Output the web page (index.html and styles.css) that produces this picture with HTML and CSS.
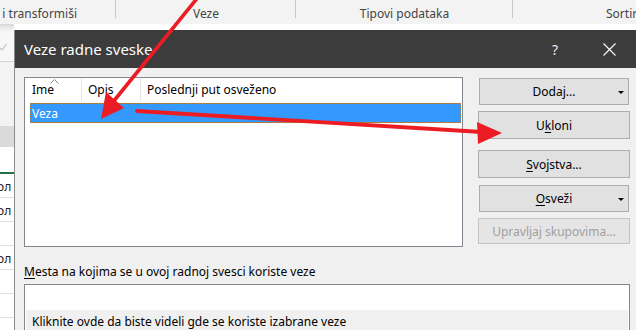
FILE: index.html
```html
<!DOCTYPE html>
<html lang="sr">
<head>
    <meta charset="UTF-8">
    <meta name="viewport" content="width=device-width, initial-scale=1.0">
    <title>Veze radne sveske</title>
    <link rel="stylesheet" href="styles.css">
</head>
<body>
    <div class="ribbon">
        <div class="group g1"><span>Preuzmi i transformiši</span></div>
        <div class="group g2"><span>Veze</span></div>
        <div class="group g3"><span>Tipovi podataka</span></div>
        <div class="group g4"><span>Sortiraj i filtriraj</span></div>
    </div>

    <div class="workspace">
        <div class="sheet">
            <div class="formula-bar">
                <svg class="check" width="8" height="8" viewBox="0 0 8 8"><polyline points="0.5,4.5 3,7 7.5,1" fill="none" stroke="#c4c4c4" stroke-width="1.2"/></svg>
            </div>
            <div class="sheet-gap"></div>
            <div class="col-head"></div>
            <div class="first-row"></div>
            <div class="cell">ол</div>
            <div class="cell">ол</div>
            <div class="cell"></div>
            <div class="cell">ол</div>
            <div class="cell"></div>
            <div class="cell"></div>
        </div>

        <div class="dialog">
            <div class="titlebar">
                <span class="title">Veze radne sveske</span>
                <span class="help">?</span>
                <span class="close">
                    <svg width="13" height="13" viewBox="0 0 13 13"><path d="M0.5 0.5 L12.5 12.5 M12.5 0.5 L0.5 12.5" stroke="#fff" stroke-width="1.1"/></svg>
                </span>
            </div>

            <div class="dialog-body">
                <div class="top-row">
                    <div class="list">
                        <div class="list-head">
                            <div class="col col-name">Ime
                                <svg class="sort" width="9" height="5" viewBox="0 0 9 5"><polyline points="0.5,4.5 4.5,0.5 8.5,4.5" fill="none" stroke="#8a8a8a" stroke-width="1"/></svg>
                            </div>
                            <div class="col col-desc">Opis</div>
                            <div class="col col-time">Poslednji put osveženo</div>
                        </div>
                        <div class="list-row selected">Veza</div>
                    </div>

                    <div class="buttons">
                        <button class="btn split btn-add">Dodaj...<span class="caret"></span></button>
                        <button class="btn btn-remove">U<u>k</u>loni</button>
                        <button class="btn btn-props"><u>S</u>vojstva...</button>
                        <button class="btn split btn-refresh"><u>O</u>sveži<span class="caret"></span></button>
                        <button class="btn btn-groups" disabled>Upravljaj skupovima...</button>
                    </div>
                </div>

                <p class="places-label"><u>M</u>esta na kojima se u ovoj radnoj svesci koriste veze</p>
                <div class="places">
                    <div class="places-blank"></div>
                    <div class="places-hint">Kliknite ovde da biste videli gde se koriste izabrane veze</div>
                </div>
            </div>
        </div>
    </div>

    <svg class="arrows" width="636" height="330" viewBox="0 0 636 330">
        <line x1="199" y1="-4" x2="113" y2="102" stroke="#ec1c24" stroke-width="3.6" stroke-linecap="round"/>
        <polygon points="101,119 106,92 124,108" fill="#ec1c24"/>
        <line x1="137" y1="111" x2="482" y2="132" stroke="#ec1c24" stroke-width="3.8" stroke-linecap="round"/>
        <polygon points="502,133 477,122 478,144" fill="#ec1c24"/>
    </svg>
</body>
</html>
```

FILE: styles.css
```css
* {
    box-sizing: border-box;
    margin: 0;
    padding: 0;
}

body {
    width: 636px;
    height: 330px;
    overflow: hidden;
    position: relative;
    font-family: 'Noto Sans', 'Open Sans', sans-serif;
    font-size: 12px;
    color: #000;
    background: #fff;
}

/* ribbon strip at the top */
.ribbon {
    height: 24px;
    display: flex;
    background: #f3f3f3;
    color: #444;
    overflow: hidden;
}

.group {
    flex: none;
    height: 24px;
    padding-top: 6px;
    line-height: 16px;
    white-space: nowrap;
    display: flex;
    justify-content: center;
    background: linear-gradient(#c8c8c8, #c8c8c8) no-repeat right top / 1px 18px;
}

.g1 {
    width: 116px;
    justify-content: flex-end;
    padding-right: 39px;
}

.g2 { width: 180px; }
.g3 { width: 217px; }

.g4 {
    width: 200px;
    justify-content: flex-start;
    padding-left: 93px;
    background: none;
}

/* the sheet behind the dialog */
.workspace {
    position: relative;
    height: 306px;
}

.sheet {
    width: 14px;
    height: 306px;
    background: #fff;
    overflow: hidden;
}

.formula-bar {
    height: 38px;
    background: linear-gradient(#d6d6d6, #ececec 4px, #f7f7f7 8px);
    border-bottom: 1px solid #d4d4d4;
    position: relative;
}

.check {
    position: absolute;
    left: -1px;
    top: 19px;
}

.sheet-gap {
    height: 64px;
    background: #f3f3f3;
}

.col-head {
    height: 21px;
    background: #dadada;
}

.first-row {
    height: 27px;
    background: #fff;
    border-bottom: 2px solid #217346;
}

.cell {
    height: 24px;
    line-height: 26px;
    border-bottom: 1px solid #e1e1e1;
    text-indent: -3px;
    font-size: 12px;
    color: #222;
}

/* dialog window */
.dialog {
    position: absolute;
    left: 14px;
    top: 6px;
    width: 640px;
    height: 300px;
    overflow: hidden;
    background: #f0f0f0;
    border-left: 1px solid #8c8c8c;
}

.titlebar {
    height: 38px;
    background: #3c3c3c;
    color: #fff;
    display: flex;
    align-items: center;
    padding-left: 9px;
}

.title {
    flex: 1;
    font-size: 15px;
    padding-bottom: 1px;
}

.help {
    width: 20px;
    text-align: center;
    font-size: 14px;
    margin-right: 22px;
    color: #e8e8e8;
}

.close {
    width: 44px;
    margin-right: 23px;
    display: flex;
    justify-content: center;
}

.dialog-body {
    padding: 9px 0 0 9px;
}

.top-row {
    display: flex;
}

.list {
    width: 439px;
    height: 170px;
    background: #fff;
    border: 1px solid #828790;
}

.list-head {
    height: 23px;
    display: flex;
}

.col {
    line-height: 23px;
    border-right: 1px solid #e5e5e5;
    position: relative;
}

.col-name {
    width: 57px;
    padding-left: 7px;
}

.col-desc {
    width: 59px;
    padding-left: 6px;
}

.col-time {
    flex: 1;
    padding-left: 6px;
    border-right: none;
}

.sort {
    position: absolute;
    left: 25px;
    top: 1px;
}

.list-row {
    height: 20px;
    line-height: 19px;
    margin: 2px 1px 0 5px;
    padding-left: 2px;
}

.selected {
    background: #3399ff;
    color: #fff;
    border: 1px dotted #b07a3c;
    padding-left: 1px;
}

/* command buttons */
.buttons {
    width: 152px;
    margin-left: 15px;
    display: flex;
    flex-direction: column;
}

.btn {
    font-family: inherit;
    font-size: 12px;
    color: #000;
    background: #e1e1e1;
    border: 1px solid #adadad;
    position: relative;
}

.btn u {
    text-underline-offset: 2px;
}

.btn-add {
    height: 27px;
    margin: 1px 1px 0;
}

.btn-remove {
    height: 28px;
    margin-top: 6px;
}

.btn-props {
    height: 28px;
    margin-top: 11px;
}

.btn-refresh {
    height: 27px;
    margin: 7px 1px 0;
}

.btn-groups {
    height: 26px;
    margin-top: 6px;
    color: #a0a0a0;
    background: #e5e5e5;
    border-color: #c4c4c4;
}

.caret {
    position: absolute;
    right: 4px;
    top: 12px;
    border-left: 3px solid transparent;
    border-right: 3px solid transparent;
    border-top: 3px solid #000;
}

/* lower part */
.places-label {
    margin-top: 17px;
    line-height: 16px;
}

.places-label u {
    text-underline-offset: 2px;
}

.places {
    width: 606px;
    height: 46px;
    margin-top: 4px;
    background: #fff;
    border: 1px solid #828790;
    border-bottom: none;
    padding: 0 1px;
}

.places-blank {
    height: 25px;
}

.places-hint {
    background: #f0f0f0;
    height: 21px;
    line-height: 24px;
    padding-left: 6px;
}

.arrows {
    position: absolute;
    left: 0;
    top: 0;
    pointer-events: none;
}
```
